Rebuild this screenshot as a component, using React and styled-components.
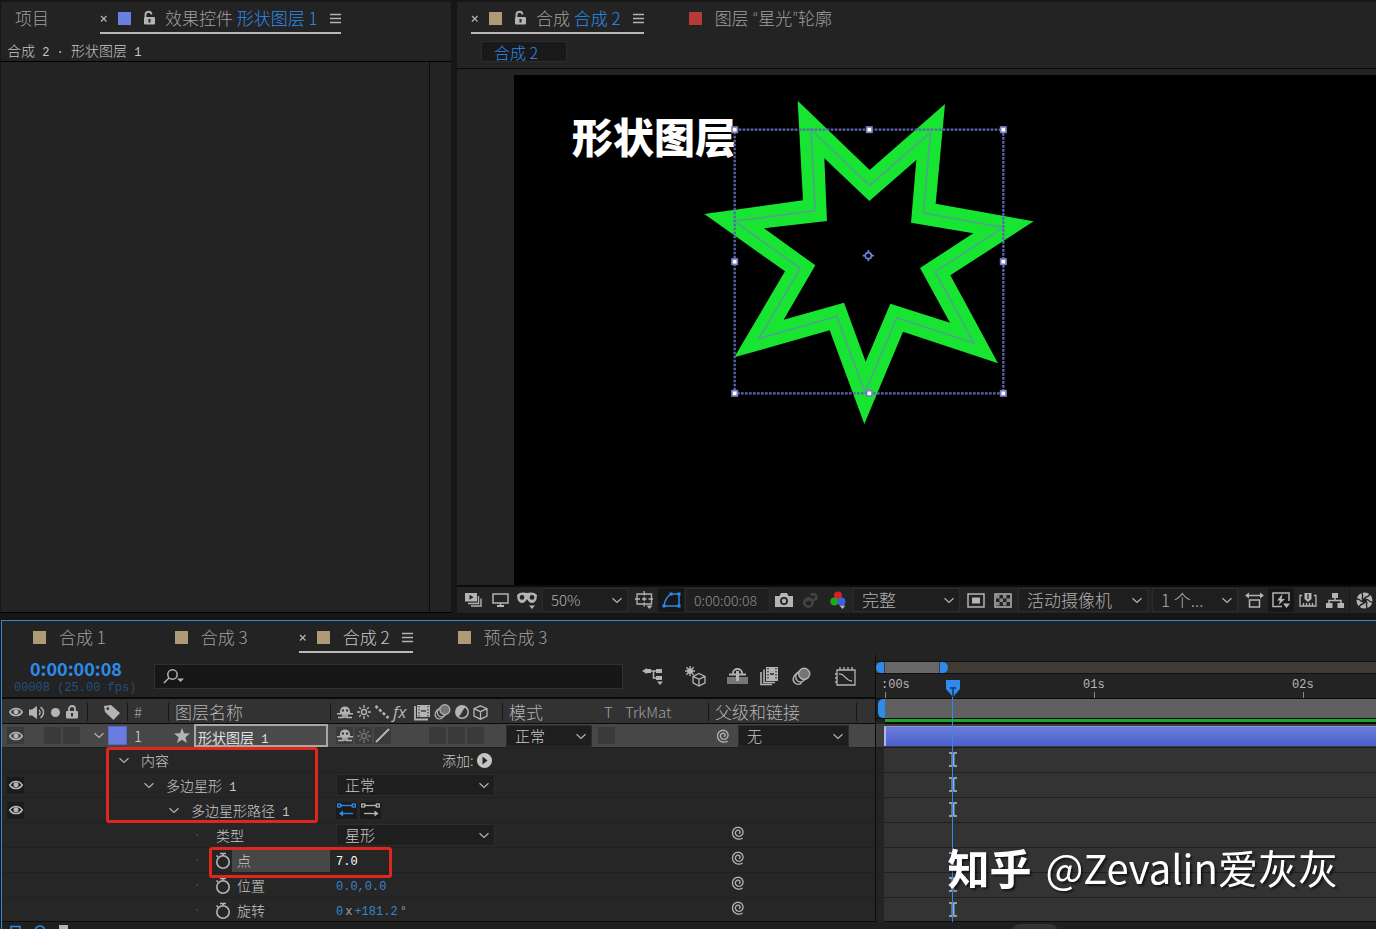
import React from "react";
import styled, { createGlobalStyle } from "styled-components";

const UI = `"Noto Sans CJK SC", "Liberation Sans", sans-serif`;
const MONO = `"Liberation Mono", "Noto Sans CJK SC", monospace`;
const BLUE = "#2d8ceb";
const GREY = "#b4b4b4";

const Global = createGlobalStyle`
  *, *::before, *::after { box-sizing: border-box; }
  html, body { margin: 0; background: #161616; }
  body { font-family: ${UI}; font-weight: 300; color: ${GREY}; }
  button, input, select { font: inherit; color: inherit; margin: 0; padding: 0; border: 0; background: none; }
  svg { display: block; flex: none; overflow: visible; }
`;

/* ---------- page frame ---------- */
const Page = styled.div`
  height: 100vh;
  display: flex;
  flex-direction: column;
  gap: 7px;
  overflow: hidden;
`;
const TopArea = styled.div`
  flex: 1;
  min-height: 0;
  display: flex;
  gap: 6px;
  padding: 2px 0 0 1px;
`;
const Panel = styled.section`
  display: flex;
  flex-direction: column;
  min-width: 0;
  background: #232323;
`;
const EffectsPanel = styled(Panel)`
  flex: 0 0 450px;
  border-bottom: 1px solid #000;
`;
const CompPanel = styled(Panel)`
  flex: 1;
`;
const TimelinePanel = styled(Panel)`
  margin-left: 1px;
  border: solid #3a86cc;
  border-width: 1px 0 0 1px;
`;

/* ---------- tabs ---------- */
const Tabs = styled.div`
  display: flex;
  align-items: flex-start;
  gap: 27px;
  height: ${(p) => p.$height}px;
  padding-left: ${(p) => p.$left}px;
`;
const TabBox = styled.div`
  display: flex;
  align-items: center;
  gap: 10px;
  height: 32px;
  font-size: 17px;
  line-height: 24px;
  white-space: nowrap;
  color: ${(p) => (p.$active && !p.$lock ? "#c8c8c8" : "#a0a0a0")};
  padding: ${(p) => (p.$active ? "2px 0 0" : p.$bare ? "2px 24px 0 0" : "2px 24px 0 18px")};
  border-bottom: 2px solid ${(p) => (p.$active ? "#b9b9b9" : "transparent")};
`;
const Swatch = styled.span`
  width: 13px;
  height: 13px;
  background: ${(p) => p.$color};
  margin-right: ${(p) => (p.$wide ? 3 : 0)}px;
`;
const BlueText = styled.span`
  color: ${BLUE};
`;
const TabButton = styled.button`
  width: ${(p) => p.$w}px;
  height: 20px;
  display: flex;
  align-items: center;
  justify-content: flex-end;
`;
const QuoteMark = styled.span`
  font-family: Lato, sans-serif;
`;

/* ---------- effects panel ---------- */
const PathLine = styled.div`
  height: 21px;
  padding-left: 6px;
  border-bottom: 1px solid #000;
  font-size: 14px;
  line-height: 18px;
  color: #c8c8c8;
`;
const EffectsBody = styled.div`
  flex: 1;
  margin-right: 21px;
  border-right: 1px solid #0c0c0c;
`;
const Latin = styled.span`
  font-family: ${MONO};
  font-size: 12px;
`;

/* ---------- composition panel ---------- */
const Crumbs = styled.div`
  height: 28px;
  padding-left: 24px;
  border-bottom: 1px solid #0a0a0a;
`;
const Crumb = styled.button`
  display: block;
  width: 86px;
  height: 21px;
  padding-left: 12px;
  text-align: left;
  font-size: 16px;
  line-height: 18px;
  color: ${BLUE};
  background: #191919;
  border: 1px solid #2c2c2c;
`;
const Stage = styled.div`
  flex: 1;
  min-height: 0;
  padding: 6px 0 0 57px;
  border-bottom: 2px solid #0c0c0c;
`;
const Canvas = styled.div`
  position: relative;
  height: 100%;
  overflow: hidden;
  background: #000;
`;
const CanvasTitle = styled.div`
  position: absolute;
  left: 58px;
  top: 30px;
  font-size: 41px;
  line-height: 60px;
  font-weight: 900;
  color: #fff;
  white-space: nowrap;
`;
const StarDrawing = styled.svg`
  position: absolute;
  left: 176px;
  top: 5px;
  width: 360px;
  height: 360px;
`;
const ViewerBar = styled.div`
  display: flex;
  align-items: center;
  gap: 1px;
  height: 26px;
  padding-left: 3px;
  overflow: hidden;
`;
const ToolButton = styled.button`
  flex: none;
  width: 26px;
  height: 24px;
  display: flex;
  align-items: center;
  justify-content: center;
  background: ${(p) => (p.$on ? "#171717" : "transparent")};
`;
const ViewerTime = styled.div`
  flex: none;
  width: 85px;
  height: 24px;
  padding-left: 8px;
  font-size: 14px;
  line-height: 22px;
  color: #8e8e8e;
  background: #1f1f1f;
  border: 1px solid #2b2b2b;
`;
const Divider = styled.span`
  flex: none;
  width: 1px;
  height: 24px;
  background: #181818;
`;

/* ---------- drop-downs ---------- */
const SelectBox = styled.span`
  position: relative;
  flex: none;
  display: block;
  width: ${(p) => p.$w}px;
  height: ${(p) => p.$h || 24}px;
  margin: ${(p) => (p.$bar ? "0 2px 0 1px" : "0")};
  select {
    appearance: none;
    display: block;
    width: 100%;
    height: 100%;
    padding-left: 8px;
    font-size: ${(p) => p.$size || 17}px;
    line-height: 20px;
    color: ${(p) => p.$color || "#b0b0b0"};
    background: #1e1e1e;
    border: 1px solid #2c2c2c;
    border-radius: 0;
  }
  svg {
    position: absolute;
    right: 5px;
    top: 50%;
    margin-top: -3px;
    pointer-events: none;
  }
`;

/* ---------- timeline ---------- */
const TimelineBody = styled.div`
  display: flex;
`;
const Outline = styled.div`
  position: relative;
  flex: 0 0 874px;
  border-right: 1px solid #0a0a0a;
`;
const ControlRow = styled.div`
  display: flex;
  align-items: center;
  height: 44px;
  border-bottom: 2px solid #0a0a0a;
`;
const TimeBlock = styled.div`
  width: 152px;
  padding: 3px 0 0 12px;
  white-space: nowrap;
`;
const CurrentTime = styled.div`
  padding-left: 16px;
  font-size: 18px;
  line-height: 20px;
  font-weight: 700;
  color: ${BLUE};
`;
const FrameInfo = styled.div`
  font-family: ${MONO};
  font-size: 12px;
  line-height: 20px;
  color: #24507d;
`;
const SearchBox = styled.label`
  display: flex;
  align-items: center;
  gap: 8px;
  width: 469px;
  height: 25px;
  padding-left: 8px;
  background: #171717;
  border: 1px solid #303030;
  input {
    flex: 1;
    height: 20px;
    font-size: 14px;
    outline: none;
  }
`;
const SwitchBar = styled.div`
  display: flex;
  gap: 4px;
  padding-left: 16px;
  button { width: 28px; }
  button:nth-child(2) { margin: 0 10px; }
  button:last-child { margin-left: 12px; }
`;
const grid = `
  display: grid;
  grid-template-columns: 85px 40px 41px 162px 172px 206px 148px 1fr;
`;
const HeaderRow = styled.div`
  ${grid}
  align-items: center;
  height: 25px;
  padding-top: 2px;
  background: #323232;
  border-bottom: 1px solid #0a0a0a;
  font-size: 17px;
  line-height: 22px;
  white-space: nowrap;
`;
const HeadCell = styled.div`
  display: flex;
  align-items: center;
  gap: ${(p) => p.$gap || 0}px;
  height: 18px;
  padding-left: ${(p) => p.$left || 6}px;
  border-left: 1px solid ${(p) => (p.$first ? "transparent" : "#161616")};
`;
const HeadTitle = styled.span`
  width: 95px;
`;
const SmallHead = styled.span`
  font-size: 15px;
  width: ${(p) => p.$w || 10}px;
  color: #a0a0a0;
`;
const LayerRow = styled.div`
  ${grid}
  height: 24px;
  background: #474747;
  border-bottom: 1px solid #202020;
`;
const LayerCell = styled.div`
  display: flex;
  align-items: center;
  gap: ${(p) => p.$gap || 0}px;
  padding-left: ${(p) => p.$left || 0}px;
`;
const Box = styled.button`
  flex: none;
  display: flex;
  align-items: center;
  justify-content: center;
  width: ${(p) => p.$w || 17}px;
  height: 17px;
  background: ${(p) => (p.$deep ? "#1b1b1b" : "#3a3a3a")};
  margin-left: ${(p) => p.$ml || 0}px;
`;
const LayerColor = styled.span`
  width: 19px;
  height: 19px;
  background: #6a7ce0;
  border: 1px solid #5868c4;
  margin-left: 3px;
`;
const LayerName = styled.div`
  width: 134px;
  height: 23px;
  padding-left: 2px;
  font-size: 14px;
  line-height: 22px;
  font-weight: 400;
  color: #e0e0e0;
  background: #4b4b4b;
  border: 2px solid #a8a8a8;
  white-space: nowrap;
`;
const Index = styled.span`
  font-size: 15px;
  line-height: 22px;
  color: #dcdcdc;
  padding-left: 7px;
`;
const PropRow = styled.div`
  display: grid;
  grid-template-columns: 85px 243px 172px 1fr;
  height: ${(p) => (p.$last ? 24 : 25)}px;
  background: #262626;
  border-bottom: 1px solid ${(p) => (p.$last ? "#0c0c0c" : "#212121")};
  font-size: 14px;
  line-height: 22px;
  color: #c8c8c8;
  white-space: nowrap;
`;
const PropName = styled.div`
  display: flex;
  align-items: center;
  padding-left: ${(p) => p.$indent}px;
`;
const PropMark = styled.span`
  flex: none;
  display: flex;
  justify-content: ${(p) => (p.$center ? "center" : "flex-start")};
  align-items: center;
  width: ${(p) => p.$w}px;
`;
const PropLabel = styled.span`
  flex: ${(p) => (p.$hot ? 1 : "none")};
  height: 23px;
  padding-left: 5px;
  background: ${(p) => (p.$hot ? "#474747" : "transparent")};
`;
const PropValue = styled.div`
  display: flex;
  align-items: center;
  gap: ${(p) => (p.$wide ? 3 : 2)}px;
  padding-left: 6px;
`;
const Value = styled.button`
  padding-top: 3px;
  font-family: ${MONO};
  font-size: 12px;
  color: ${(p) => (p.$hot ? "#fff" : "#3a84cf")};
`;
const Unit = styled.span`
  padding-top: 3px;
  font-family: ${MONO};
  font-size: 12px;
  color: #a4a4a4;
`;
const AddButton = styled.button`
  display: flex;
  align-items: center;
  gap: 3px;
  height: 22px;
  padding-left: 106px;
`;
const LinkCell = styled.div`
  padding: 2px 0 0 229px;
`;
const MarkBox = styled.div`
  position: absolute;
  left: ${(p) => p.$x}px;
  top: ${(p) => p.$y}px;
  width: ${(p) => p.$w}px;
  height: ${(p) => p.$h}px;
  border: 3px solid #e0271f;
  border-radius: 3px;
  pointer-events: none;
`;

/* ---------- time ruler ---------- */
const Tracks = styled.div`
  position: relative;
  flex: 1;
  min-width: 0;
  overflow: hidden;
`;
const Navigator = styled.div`
  display: flex;
  align-items: center;
  gap: 1px;
  height: 13px;
  margin-top: 6px;
  background: #3f3a33;
  border: solid #101010;
  border-width: 1px 0;
`;
const NavHandle = styled.span`
  width: 8px;
  height: 11px;
  background: ${BLUE};
  border-radius: ${(p) => (p.$right ? "0 6px 6px 0" : "6px 0 0 6px")};
`;
const NavThumb = styled.span`
  width: 54px;
  height: 11px;
  background: #686868;
`;
const Ruler = styled.div`
  display: flex;
  height: 25px;
  padding-left: 9px;
  border-bottom: 1px solid #0a0a0a;
`;
const Second = styled.div`
  flex: 0 0 209px;
  display: flex;
  flex-direction: column;
  justify-content: space-between;
  font-family: ${MONO};
  font-size: 12px;
  line-height: 20px;
  color: #b8b8b8;
  span { height: 18px; padding-top: 1px; margin-left: ${(p) => (p.$first ? -4 : -11)}px; }
  i { width: 1px; height: 6px; background: #8a8a8a; }
`;
const WorkArea = styled.div`
  display: flex;
  height: 20px;
  padding-left: 2px;
  background: #222;
  border-bottom: 1px solid #0c0c0c;
  i { width: 7px; background: ${BLUE}; border-radius: 5px 0 0 5px; }
  b { flex: 1; background: #606060; }
`;
const CacheLine = styled.div`
  height: 5px;
  margin-left: 9px;
  border-bottom: 2px solid #0c0c0c;
  background: #22a32a;
`;
const LayerTrack = styled.div`
  height: 24px;
  padding: 2px 0 1px 8px;
  background: #3d3d3d;
  border-bottom: 1px solid #1c1c1c;
  div {
    height: 100%;
    background: linear-gradient(#6d7dd8, #4a5fcc);
    border-left: 2px solid #b3b5e8;
    border-top: 1px solid #8d95cf;
  }
`;
const PropTrack = styled.div`
  height: ${(p) => (p.$last ? 24 : 25)}px;
  margin-left: 8px;
  padding: 4px 0 0 64px;
  background: #333;
  border-bottom: 1px solid ${(p) => (p.$last ? "#0c0c0c" : "#202020")};
`;
const Playhead = styled.svg`
  position: absolute;
  left: 70px;
  top: 25px;
`;
const Footer = styled.div`
  display: flex;
  align-items: flex-start;
  gap: 13px;
  height: 7px;
  padding: 2px 0 0 8px;
  overflow: hidden;
  background: #1f1f1f;
`;
const ZoomThumb = styled.span`
  width: 46px;
  height: 16px;
  margin-left: 930px;
  border-radius: 8px;
  background: #333;
`;
const Watermark = styled.div`
  position: fixed;
  right: 38px;
  bottom: 32px;
  display: flex;
  align-items: center;
  gap: 14px;
  font-size: 40px;
  line-height: 60px;
  font-weight: 400;
  color: #fff;
  white-space: nowrap;
  text-shadow: 2px 2px 2px rgba(0, 0, 0, 0.55);
  b { font-size: 42px; font-weight: 700; }
`;

/* ---------- icons ---------- */
const Svg = ({ w = 18, h = 16, children, ...rest }) => (
  <svg width={w} height={h} viewBox={`0 0 ${w} ${h}`} fill="none" stroke={GREY} strokeWidth="1.5" aria-hidden="true" {...rest}>
    {children}
  </svg>
);
const F = { fill: GREY, stroke: "none" };
const Chevron = () => (
  <Svg w={12} h={7} strokeWidth="1.2"><path d="M1.500 1.200 6 5.400l4.500-4.200" /></Svg>
);
const Close = () => (
  <Svg w={8} h={8} strokeWidth="1.2"><path d="m1 2 5.500 5.500M6.500 2 1 7.500" /></Svg>
);
const Menu = () => (
  <Svg w={11} h={10} strokeWidth="1.3"><path d="M0 1.500h11M0 5.500h11M0 9.500h11" /></Svg>
);
const OpenLock = () => (
  <Svg w={12} h={14}>
    <path d="M2.500 6.500V4a3 3 0 0 1 6-.5" strokeWidth="1.8" />
    <rect x="1" y="6" width="11" height="7.500" rx="1" {...F} />
    <path d="M6.500 8v3.500" stroke="#232323" strokeWidth="2" />
  </Svg>
);
const Lock = () => (
  <Svg w={12} h={14}>
    <path d="M3 6V4a3 3 0 0 1 6 0v2" strokeWidth="1.8" />
    <rect x="0" y="6" width="12" height="7.500" rx="1" {...F} />
    <path d="M6 8v3.500" stroke="#323232" strokeWidth="2" />
  </Svg>
);
const Eye = () => (
  <Svg w={14} h={10}>
    <path d="M.8 5C3.500.3 10.500.3 13.200 5 10.500 9.700 3.500 9.700.8 5Z" strokeWidth="1.600" />
    <circle cx="7" cy="4.800" r="2.500" {...F} />
  </Svg>
);
const Speaker = () => (
  <Svg w={16} h={13} strokeWidth="1.400">
    <path d="M0 3.500h3L8 0v13L3 9.500H0Z" {...F} />
    <path d="M10 4c1.500 1.500 1.500 3.500 0 5M11.500 1.200c4 2.500 4 8 0 10.600" />
  </Svg>
);
const Tag = () => (
  <Svg w={16} h={15}>
    <path fillRule="evenodd" d="M0 1 7 0l9 8-6.500 7L1 7ZM3.800 2.300a1.400 1.400 0 1 0 0 2.800 1.400 1.400 0 0 0 0-2.800Z" {...F} />
  </Svg>
);
const Shy = () => (
  <Svg w={16} h={13} strokeWidth="1.600">
    <path d="M3 7V4.800a5 4.300 0 0 1 10 0V7Z" {...F} />
    <path d="M0 7.700h16M8 5v7M1 11.500h5V8M15 11.500h-5V8" />
    <path d="M4.800 4.500h2.200M9 4.500h2.200" stroke="#323232" strokeWidth="1.800" />
  </Svg>
);
const Sun = ({ dim }) => (
  <Svg w={14} h={14} strokeWidth="1.400" stroke={dim ? "#747474" : GREY}>
    <circle cx="7" cy="7" r="2.500" />
    <path d="M7 0v3M7 11v3M0 7h3M11 7h3M2.200 2.200l1.800 1.800M10 10l1.800 1.800M11.800 2.200 10 4M4 10l-1.800 1.800" />
  </Svg>
);
const Dots = () => (
  <Svg w={14} h={14} strokeWidth="2.600" strokeDasharray="3 2"><path d="m.5 1 13 12" /></Svg>
);
const Fx = styled.em`
  width: 17px;
  font-family: "Open Sans", sans-serif;
  font-size: 17px;
  font-weight: 400;
  line-height: 18px;
`;
const Film = () => (
  <Svg w={16} h={15}>
    <path d="M3 0h13v12H3Z" {...F} />
    <path d="M1 1v13.500h13" strokeWidth="1.800" />
    <path d="M5 1v10.500M14 1v10.500" stroke="#262626" strokeWidth="1" strokeDasharray="1.500 1.500" />
    <path d="M7 6h5" stroke="#262626" strokeWidth="1.200" />
  </Svg>
);
const Films = () => (
  <Svg w={18} h={18}>
    <path d="M6 0h12v14H6Z" {...F} />
    <path d="M4 2.500v13h11M1 5v12.500h11" strokeWidth="1.600" />
    <path d="M8 1v12M16 1v12" stroke="#232323" strokeDasharray="1.500 1.500" strokeWidth="1.200" />
    <path d="M10 7h4" stroke="#232323" />
  </Svg>
);
const Blur = ({ big }) => (
  <Svg w={big ? 19 : 17} h={big ? 19 : 16} viewBox="0 0 18 17" strokeWidth="1.300">
    <path d="M5.500 5.200C1 7 0 12 2.500 14.500c1.800 2 5 2 7-.5" />
    <path d="M7 3.500c-4 2-4.500 6.500-2 9 2 1.800 5 1.500 7-.8" />
    <circle cx="11.500" cy="6" r="5.300" fill="#757575" />
  </Svg>
);
const HalfCircle = () => (
  <Svg w={14} h={14}>
    <circle cx="7" cy="7" r="6.200" />
    <path d="M11.400 2.600A6.200 6.200 0 0 0 2.600 11.400C7 11.500 7 3 11.400 2.600Z" {...F} />
  </Svg>
);
const Cube = ({ w = 15, h = 15 }) => (
  <Svg w={w} h={h} viewBox="0 0 15 15" strokeWidth="1.300">
    <path d="m7.500.8 6.500 2.900v7.300l-6.500 3.200L1 11V3.700ZM1 3.700l6.500 3 6.500-3M7.500 6.700v7.500" />
  </Svg>
);
const spiralPath = Array.from({ length: 49 }, (_, i) => {
  const t = i / 48;
  const angle = Math.PI * (0.6 + 4.1 * t);
  const radius = 1 + 6 * t;
  const x = 7.5 + radius * Math.cos(angle + Math.PI);
  const y = 7.5 - radius * Math.sin(angle + Math.PI);
  return `${i ? "L" : "M"}${x.toFixed(1)} ${y.toFixed(1)}`;
}).join("");
const Spiral = () => (
  <Svg w={15} h={15} strokeWidth="1.300" strokeLinejoin="round"><path d={spiralPath} /></Svg>
);
const Stopwatch = () => (
  <Svg w={16} h={17} strokeWidth="1.600">
    <circle cx="8" cy="10" r="6.200" />
    <path d="M8 4V1M5 1.500h6M1.500 3.500 3 5" />
  </Svg>
);
const IBeam = () => (
  <svg width="10" height="15" viewBox="0 0 10 15" fill="none" aria-hidden="true">
    <path d="M1 1h3l1 1 1-1h3M1 14h3l1-1 1 1h3" stroke="#b8c0c8" strokeWidth="1.400" />
    <path d="M5 1v13" stroke="#8fb0d0" strokeWidth="3" />
  </svg>
);
const PathDir = ({ on }) => {
  const c = on ? BLUE : GREY;
  return (
    <Svg w={19} h={14} stroke={c} strokeWidth="1.300">
      <rect x=".7" y="1" width="3" height="3" />
      <rect x="15.300" y="1" width="3" height="3" />
      <path d="M4 2.500h11" />
      {on ? <path d="M16 10.500H4" /> : <path d="M3 10.500h12" />}
      <path d={on ? "m2 10.500 4-3v6Z" : "m17.500 10.500-4-3v6Z"} fill={c} stroke="none" />
    </Svg>
  );
};

/* viewer toolbar icons */
const Previews = () => (
  <Svg w={17} h={14}>
    <path fillRule="evenodd" d="M0 0h12v8.500H0ZM4.500 1.800v5L8.500 4.300Z" {...F} />
    <path d="M13.500 3v7.500H3M16 5.500V13H6" strokeWidth="1.400" />
  </Svg>
);
const Monitor = () => (
  <Svg w={17} h={14}><path d="M1 1h15v9H1ZM8.500 10v2.500" /><path d="M5 12h7v2H5Z" {...F} /></Svg>
);
const Goggles = () => (
  <Svg w={20} h={17}>
    <path fillRule="evenodd" d="M0 3Q3-.5 10 1q7-1.500 10 2-.3 8-5 8-3 0-5-4-2 4-5 4-4.700 0-5-8ZM5 3a2.400 2.400 0 1 0 0 4.800A2.400 2.400 0 0 0 5 3Zm10 0a2.400 2.400 0 1 0 0 4.800A2.400 2.400 0 0 0 15 3Z" {...F} />
    <path d="M12 13.500h6l-3 3.500Z" {...F} />
  </Svg>
);
const GridIcon = () => (
  <Svg w={18} h={18}>
    <path d="M2 3h14.500v10H2ZM9.200 0v4.500M9.200 11.500v4M0 8h5M13.500 8H18M7 8h4.500M9.200 6v4" strokeWidth="1.300" />
    <path d="M11.500 14.500h6l-3 3.500Z" {...F} />
  </Svg>
);
const MaskShape = () => (
  <Svg w={19} h={16} stroke={BLUE}>
    <path d="M2 14Q3 6 9 2h8v12Z" />
    <path d="M.5 12.500h3v3h-3ZM7.500.5h3v3h-3ZM15.500.5h3v3h-3ZM15.500 12.500h3v3h-3Z" fill={BLUE} stroke="none" />
  </Svg>
);
const Camera = () => (
  <Svg w={18} h={14}>
    <path fillRule="evenodd" d="M0 3h4.500L6 0h6l1.500 3H18v11H0ZM9 4a4 4 0 1 0 0 8 4 4 0 0 0 0-8Z" {...F} />
    <circle cx="9" cy="8" r="2.200" {...F} />
  </Svg>
);
const ShowSnapshot = () => (
  <Svg w={18} h={15} stroke="#444" strokeWidth="2.500">
    <path d="M9 2.500a3 3 0 1 1 5 3.500l-3 1" />
    <circle cx="6.500" cy="9.500" r="4.200" />
    <path d="M1 11q5-7 10-2" strokeWidth="1.500" />
  </Svg>
);
const Rgb = () => (
  <Svg w={16} h={18} stroke="none">
    <circle cx="8" cy="4.500" r="4" fill="#d92020" />
    <circle cx="4.300" cy="10.500" r="4" fill="#1fa81f" />
    <circle cx="11.500" cy="10.500" r="4" fill="#3b5fe0" />
    <path d="M9.500 14.500h6l-3 3.500Z" {...F} />
  </Svg>
);
const Roi = () => (
  <Svg w={18} h={15}><path d="M1 1h16v13H1Z" /><path d="M5 4.500h8v6H5Z" {...F} /></Svg>
);
const Checker = () => (
  <Svg w={18} h={15}>
    <path d="M1 1h16v13H1Z" />
    <path d="M2 2h3.500v3.500H2ZM9 2h3.500v3.500H9ZM5.500 5.500H9V9H5.500ZM12.500 5.500H16V9h-3.500ZM2 9h3.500v3.500H2ZM9 9h3.500v3.500H9Z" fill="#8a8a8a" stroke="none" />
  </Svg>
);
const Aspect = () => (
  <Svg w={19} h={15}>
    <path d="M4.500 7h10v7h-10ZM2 2.500h15" />
    <path d="m0 2.500 4-3v6ZM19 2.500l-4-3v6Z" {...F} />
  </Svg>
);
const FastPreview = () => (
  <Svg w={18} h={16}>
    <path d="M10 14.500H1V1h16v8" />
    <path d="M10.500 2 5 8.500h3L6.500 13 13 7H9.500ZM11 11.500h7L14.500 16Z" {...F} />
  </Svg>
);
const TimelineIcon = () => (
  <Svg w={18} h={14} strokeWidth="1.300">
    <path d="M3 2.500H1V13h16V2.500h-2M4.500 10v3M7.500 10v3M10.500 10v3M13.500 10v3" />
    <path d="M5.500 0h7v6L9 9 5.500 6Z" {...F} />
    <path d="M9 1v5" stroke="#232323" />
  </Svg>
);
const Flowchart = () => (
  <Svg w={18} h={15}>
    <path d="M6 0h6v5H6ZM0 10h6.500v5H0ZM11.500 10H18v5h-6.500Z" {...F} />
    <path d="M9 5v3M3 10V7.500h12V10" />
  </Svg>
);
const Shutter = () => (
  <Svg w={17} h={17}>
    <circle cx="8.500" cy="8.500" r="8" {...F} />
    <circle cx="8.500" cy="8.500" r="2.600" fill="#232323" stroke="none" />
    {[0, 60, 120, 180, 240, 300].map((a) => (
      <path key={a} d="M8.500 5.700Q12 5 14.500 2" transform={`rotate(${a} 8.500 8.500)`} stroke="#232323" strokeWidth="1.400" />
    ))}
  </Svg>
);

/* timeline switch icons */
const MiniFlow = () => (
  <Svg w={22} h={18}>
    <path d="m0 4 5-3v6ZM5 2h4v4H5ZM14 2h6v4h-6ZM14 9h6v4h-6ZM15 14.500h6L18 18Z" {...F} />
    <path d="M9 4h5M11.500 4v7H14" />
  </Svg>
);
const Draft3D = () => (
  <Svg w={22} h={21} strokeWidth="1.300">
    <path d="M6 0v10M1 5h10M2.300 1.300l7.400 7.400M9.700 1.300 2.300 8.700" />
    <circle cx="6" cy="5" r="2.800" {...F} />
    <path d="m15 7.500 6 2.800v6.500l-6 3.200-6-3.200v-6.500ZM9 10.300l6 3 6-3M15 13.300V20" />
  </Svg>
);
const HideShy = () => (
  <Svg w={21} h={16}>
    <path d="M6 7V5a4.500 4 0 0 1 9 0v2M2 6.500h17" strokeWidth="1.800" />
    <path d="M0 9h21v7H0Z" fill="#777" stroke="none" />
    <path d="M10.500 3v10" strokeWidth="3" />
  </Svg>
);
const GraphEditor = () => (
  <Svg w={21} h={19} strokeWidth="1.300">
    <path d="M2 3h18v15H2ZM5 0v3M9 0v3M13 0v3M17 0v3M0 7h2M0 11h2M0 15h2M4 7c6-1 6 7 13 7" />
  </Svg>
);
const SearchIcon = () => (
  <Svg w={21} h={15}>
    <circle cx="9.500" cy="5.500" r="4.700" /><path d="M6 9 .8 14" /><path d="M14 9.500h7l-3.500 3.500Z" {...F} />
  </Svg>
);
const Star = () => (
  <Svg w={16} h={15}><path d="m8 0 2 5.300 6 .3-4.600 3.600L13 15l-5-3.300L3 15l1.600-5.800L0 5.600l6-.3Z" {...F} /></Svg>
);
const Play = () => (
  <Svg w={15} h={15}><circle cx="7.500" cy="7.500" r="7.500" fill="#c4c4c4" stroke="none" /><path d="M5.500 3.500v8l5-4Z" fill="#222" stroke="none" /></Svg>
);

/* ---------- composed parts ---------- */
const Mixed = ({ text }) =>
  text.split(/([\x20-\x7e·]+)/).map((t, i) => (i % 2 ? <Latin key={i}>{t}</Latin> : t));

const Select = ({ label, value, ...rest }) => (
  <SelectBox {...rest}>
    <select aria-label={label} defaultValue={value}><option>{value}</option></select>
    <Chevron />
  </SelectBox>
);

const Tab = ({ color, active, lock, bare, children }) => (
  <TabBox $active={active} $bare={bare} $lock={lock}>
    {active && <TabButton $w={8} aria-label="关闭"><Close /></TabButton>}
    {color && <Swatch $color={color} $wide={!lock} />}
    {lock && <TabButton $w={14} aria-label="锁定"><OpenLock /></TabButton>}
    <span>{children}</span>
    {active && <TabButton $w={13} aria-label="菜单"><Menu /></TabButton>}
  </TabBox>
);

const Tool = ({ label, on, children }) => (
  <ToolButton aria-label={label} $on={on}>{children}</ToolButton>
);

const outerPts = [[323,62],[539,270],[765,72],[737,371],[1031,424],[781,586],[924,850],[639,755],[523,1032],[419,751],[133,832],[285,574],[43,402],[339,361]];
const innerPts = [[403,235],[538,363],[679,240],[663,428],[850,460],[690,564],[780,728],[601,671],[527,845],[462,668],[281,719],[376,556],[222,445],[411,423]];
const toPath = (pts) => `M${pts.map((p) => p.join(" ")).join("L")}Z`;
const midPts = outerPts.map((p, i) => [(p[0] + innerPts[i][0]) / 2, (p[1] + innerPts[i][1]) / 2]);
const handles = [[134,149],[538,149],[940,149],[134,545],[940,545],[134,940],[538,940],[940,940]];

const ShapeLayer = () => (
  <StarDrawing viewBox="0 0 1080 1080" fill="none" aria-hidden="true">
    <path d={toPath(outerPts) + toPath(innerPts)} fill="#17e532" fillRule="evenodd" />
    <path d={toPath(midPts)} stroke="#4fa58c" strokeWidth="5" />
    <rect x="134" y="149" width="806" height="791" stroke="#5c66ae" strokeWidth="7" strokeDasharray="8 4" />
    {handles.map(([x, y]) => (
      <rect key={`${x}-${y}`} x={x - 8} y={y - 8} width="16" height="16" fill="#fff" stroke="#7880bd" strokeWidth="5" />
    ))}
    <g stroke="#6a80d8" strokeWidth="5">
      <circle cx="535" cy="527" r="9" />
      <path d="M535 510v8M535 536v8M518 527h8M544 527h8" />
    </g>
  </StarDrawing>
);

const rows = [
  { indent: 31, mark: "chevron", label: "内容", add: true, key: true },
  { indent: 56, mark: "chevron", label: "多边星形 1", eye: true, select: "正常", key: true },
  { indent: 81, mark: "chevron", label: "多边星形路径 1", eye: true, dirs: true, key: true },
  { indent: 108, mark: "dot", label: "类型", select: "星形", link: true },
  { indent: 108, mark: "watch", label: "点", value: "7.0", hot: true, link: true, key: true },
  { indent: 108, mark: "watch", label: "位置", value: "0.0,0.0", link: true, key: true },
  { indent: 108, mark: "watch", label: "旋转", rotation: true, link: true, key: true },
];

const Property = ({ row, last }) => (
  <PropRow $last={last}>
    <LayerCell $left={5}>{row.eye && <Box $deep aria-label="显示"><Eye /></Box>}</LayerCell>
    <PropName $indent={row.indent}>
      {row.mark === "chevron" ? (
        <PropMark $w={18}><Chevron /></PropMark>
      ) : (
        <PropMark $w={row.mark === "dot" ? 16 : 19}><Svg w={3} h={3}><circle cx="2" cy="1" r="1" fill="#484848" stroke="none" /></Svg></PropMark>
      )}
      {row.mark === "watch" && <PropMark $center $w={18}><Stopwatch /></PropMark>}
      <PropLabel $hot={row.hot}><Mixed text={row.label} /></PropLabel>
    </PropName>
    <PropValue $wide={row.dirs}>
      {row.add && <AddButton><span>添加:</span><Play /></AddButton>}
      {row.select && <Select label={row.label} value={row.select} $w={159} $h={22} $size={15} $color="#c8c8c8" />}
      {row.dirs && (
        <>
          <Box $deep $w={21} aria-label="路径方向反转"><PathDir on /></Box>
          <Box $deep $w={21} aria-label="路径方向"><PathDir /></Box>
        </>
      )}
      {row.value && <Value $hot={row.hot}>{row.value}</Value>}
      {row.rotation && <><Value>0</Value><Unit>x</Unit><Value>+181.2</Value><Unit>°</Unit></>}
    </PropValue>
    <LinkCell>{row.link && <Spiral />}</LinkCell>
  </PropRow>
);

export default function App() {
  return (
    <Page>
      <Global />
      <TopArea>
        <EffectsPanel>
          <Tabs $height={39} $left={14}>
            <Tab bare>项目</Tab>
            <Tab active lock color="#6a7fe0">效果控件<BlueText> 形状图层 1</BlueText></Tab>
          </Tabs>
          <PathLine><Mixed text="合成 2 · 形状图层 1" /></PathLine>
          <EffectsBody />
        </EffectsPanel>
        <CompPanel>
          <Tabs $height={39} $left={14}>
            <Tab active lock color="#ae9a76">合成 <BlueText>合成 2</BlueText></Tab>
            <Tab color="#b53a3a">图层 <QuoteMark>“</QuoteMark>星光<QuoteMark>”</QuoteMark>轮廓</Tab>
          </Tabs>
          <Crumbs><Crumb>合成 2</Crumb></Crumbs>
          <Stage>
            <Canvas>
              <CanvasTitle>形状图层</CanvasTitle>
              <ShapeLayer />
            </Canvas>
          </Stage>
          <ViewerBar>
            <Tool label="始终预览"><Previews /></Tool>
            <Tool label="主查看器"><Monitor /></Tool>
            <Tool label="VR"><Goggles /></Tool>
            <Select label="放大率" value="50%" $w={86} $bar $size={15} />
            <Tool label="网格"><GridIcon /></Tool>
            <Tool label="蒙版可见性" on><MaskShape /></Tool>
            <ViewerTime>0:00:00:08</ViewerTime>
            <Tool label="快照"><Camera /></Tool>
            <Tool label="显示快照"><ShowSnapshot /></Tool>
            <Tool label="通道"><Rgb /></Tool>
            <Select label="分辨率" value="完整" $w={107} $bar />
            <Tool label="目标区域"><Roi /></Tool>
            <Tool label="透明网格"><Checker /></Tool>
            <Select label="3D 视图" value="活动摄像机" $w={130} $bar />
            <Select label="视图布局" value="1 个..." $w={86} $bar />
            <Tool label="像素长宽比"><Aspect /></Tool>
            <Tool label="快速预览" on><FastPreview /></Tool>
            <Tool label="时间轴"><TimelineIcon /></Tool>
            <Tool label="流程图"><Flowchart /></Tool>
            <Divider />
            <Tool label="重置曝光度"><Shutter /></Tool>
          </ViewerBar>
        </CompPanel>
      </TopArea>

      <TimelinePanel>
        <Tabs $height={34} $left={13}>
          <Tab color="#ae9a76">合成 1</Tab>
          <Tab color="#ae9a76">合成 3</Tab>
          <Tab active color="#ae9a76">合成 2</Tab>
          <Tab color="#ae9a76">预合成 3</Tab>
        </Tabs>
        <TimelineBody>
          <Outline>
            <ControlRow>
              <TimeBlock>
                <CurrentTime>0:00:00:08</CurrentTime>
                <FrameInfo>00008 (25.00 fps)</FrameInfo>
              </TimeBlock>
              <SearchBox><SearchIcon /><input aria-label="搜索" /></SearchBox>
              <SwitchBar>
                <Tool label="微型流程图"><MiniFlow /></Tool>
                <Tool label="草图 3D"><Draft3D /></Tool>
                <Tool label="隐藏"><HideShy /></Tool>
                <Tool label="帧混合"><Films /></Tool>
                <Tool label="运动模糊"><Blur big /></Tool>
                <Tool label="图表编辑器"><GraphEditor /></Tool>
              </SwitchBar>
            </ControlRow>
            <HeaderRow>
              <HeadCell $first $gap={6}>
                <Eye /><Speaker /><Svg w={9} h={9}><circle cx="4.500" cy="4.500" r="4.500" {...F} /></Svg><Lock />
              </HeadCell>
              <HeadCell $left={16}><Tag /></HeadCell>
              <HeadCell><SmallHead>#</SmallHead></HeadCell>
              <HeadCell>图层名称</HeadCell>
              <HeadCell $gap={4}>
                <Shy /><Sun /><Dots /><Fx>fx</Fx><Film /><Blur /><HalfCircle /><Cube />
              </HeadCell>
              <HeadCell>
                <HeadTitle>模式</HeadTitle>
                <SmallHead $w={21}>T</SmallHead>
                <SmallHead $w={50}>TrkMat</SmallHead>
              </HeadCell>
              <HeadCell>父级和链接</HeadCell>
              <HeadCell />
            </HeaderRow>
            <LayerRow>
              <LayerCell $left={5} $gap={2}>
                <Box aria-label="显示"><Eye /></Box><Box aria-label="独奏" $ml={18} /><Box aria-label="锁定" />
              </LayerCell>
              <LayerCell $left={6}><Chevron /><LayerColor /></LayerCell>
              <LayerCell><Index>1</Index></LayerCell>
              <LayerCell $left={6} $gap={4}><Star /><LayerName><Mixed text="形状图层 1" /></LayerName></LayerCell>
              <LayerCell $left={6} $gap={2}>
                <Box aria-label="隐藏"><Shy /></Box><Box aria-label="折叠"><Sun dim /></Box>
                <Box aria-label="品质"><Svg w={15} h={15} strokeWidth="2"><path d="M1 14 14 1" /></Svg></Box>
                <Box aria-label="帧混合" $ml={36} /><Box aria-label="运动模糊" /><Box aria-label="3D" />
              </LayerCell>
              <LayerCell $left={4} $gap={6}>
                <Select label="模式" value="正常" $w={86} $h={22} $size={15} $color="#c8c8c8" />
                <Box aria-label="保留透明度" />
              </LayerCell>
              <LayerCell $left={8} $gap={7}>
                <Spiral />
                <Select label="父级" value="无" $w={111} $h={22} $size={15} $color="#c8c8c8" />
              </LayerCell>
            </LayerRow>
            {rows.map((r, i) => <Property key={r.label} row={r} last={i === rows.length - 1} />)}
            <MarkBox $x={104} $y={92} $w={212} $h={76} />
            <MarkBox $x={207} $y={192} $w={183} $h={31} />
          </Outline>
          <Tracks>
            <Navigator><NavHandle /><NavThumb /><NavHandle $right /></Navigator>
            <Ruler>
              <Second $first><span>:00s</span><i /></Second>
              <Second><span>01s</span><i /></Second>
              <Second><span>02s</span><i /></Second>
            </Ruler>
            <WorkArea><i /><b /></WorkArea>
            <CacheLine />
            <LayerTrack><div /></LayerTrack>
            {rows.map((r, i) => (
              <PropTrack key={r.label} $last={i === rows.length - 1}>{r.key && <IBeam />}</PropTrack>
            ))}
            <Playhead width="14" height="242" viewBox="0 0 14 242" aria-hidden="true">
              <path d="M0 0h14v9l-7 8-7-8Z" fill={BLUE} />
              <path d="M4 8h6M7 8v9" stroke="#16365a" strokeWidth="1.500" />
              <path d="M6.500 17v225" stroke={BLUE} strokeWidth="1" />
            </Playhead>
          </Tracks>
        </TimelineBody>
        <Footer>
          <Svg w={11} h={10} stroke={BLUE}><path d="M1 2.500h9V10H1Z" /></Svg>
          <Svg w={12} h={10} stroke={BLUE}><circle cx="6" cy="7" r="5" /></Svg>
          <Svg w={10} h={10}><path d="M0 1h9v9H0Z" {...F} /></Svg>
          <ZoomThumb />
        </Footer>
      </TimelinePanel>
      <Watermark><b>知乎</b><span>@Zevalin爱灰灰</span></Watermark>
    </Page>
  );
}
